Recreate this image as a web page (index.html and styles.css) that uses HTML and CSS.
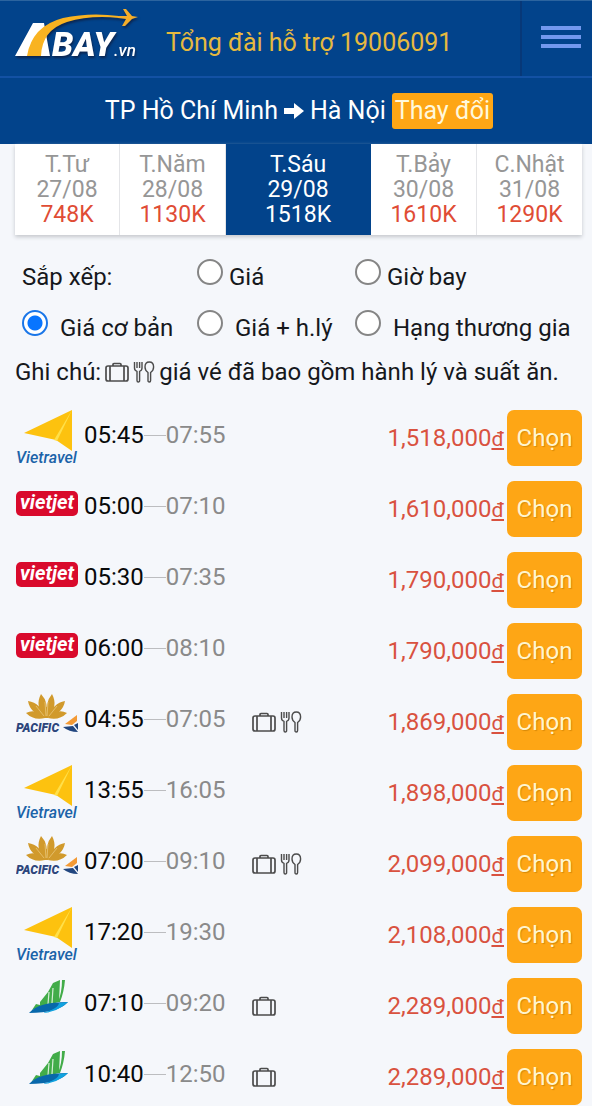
FILE: index.html
```html
<!DOCTYPE html>
<html lang="vi">
<head>
<meta charset="utf-8">
<meta name="viewport" content="width=device-width, initial-scale=1">
<title>Abay.vn - TP Hồ Chí Minh đi Hà Nội</title>
<link rel="stylesheet" href="styles.css">
</head>
<body>
<svg class="sprite" aria-hidden="true">
  <symbol id="bag" viewBox="0 0 24 20">
    <g fill="none" stroke="currentColor" stroke-width="1.700">
      <rect x="1" y="4" width="22" height="15" rx="2"/>
      <path d="M5 4v15M19 4v15M8 4V2.500Q8 1.500 9 1.500H15Q16 1.500 16 2.500V4"/>
    </g>
  </symbol>
  <symbol id="meal" viewBox="0 0 22 22">
    <g fill="none" stroke="currentColor" stroke-width="1.400" stroke-linejoin="round">
      <path d="M1.500 1V7Q1.500 9.500 4 10.300V19.500Q4 21 5.300 21T6.600 19.500V10.300Q9 9.500 9 7V1M4 1V7M6.600 1V7"/>
      <path d="M15 11.500Q12 9.500 12 6Q12 1 16.300 1T20.600 6Q20.600 9.500 17.600 11.500V19.500Q17.600 21 16.300 21T15 19.500Z"/>
    </g>
  </symbol>
  <symbol id="vietravel" viewBox="0 0 64 56">
    <path d="M8 23 56 0V41L40 30Z" fill="#fdc20f"/>
    <path d="M56 0 38 30 41 31Z" fill="#ffe04a"/>
  </symbol>
  <symbol id="vietjet" viewBox="0 0 64 56">
    <rect x="0" y="10" width="62" height="25" rx="5" fill="#d90a2c"/>
  </symbol>
  <symbol id="pacific" viewBox="0 0 64 56">
    <g fill="#d19a2c">
      <path d="M30 24Q18 13 25 0Q33 8 30.500 24ZM31 24Q29 8 36 0Q43 13 31 24Z"/>
      <path d="M29 24Q14 19 12 7Q25 9 29 24ZM32 24Q37 9 49 7Q47 19 32 24Z"/>
      <path d="M29 24Q18 27 10 19Q20 14 30 24ZM32 24Q41 14 51 19Q43 27 32 24Z"/>
      <path d="M22 13H39L32 24H29Z"/>
    </g>
    <path d="M30 22 29 8M31 22 32 8M28 22 20 12M33 22 41 12" stroke="#edcd85" stroke-width=".7"/>
    <path d="M49 30 61 21V27L56 31Z" fill="#f39a35"/>
    <path d="M47 33 57 32 62 38Q53 38 47 33ZM58 31 62 29V36Z" fill="#21467f"/>
  </symbol>
  <symbol id="bamboo" viewBox="0 0 64 56">
    <path d="M16 32 20 26 24 27V24L32 14 37 5 44 2 43 24 24 29Z" fill="#42ac49"/>
    <path d="M46 2H49Q48 14 44 24H42Q46 14 46 2Z" fill="#42ac49"/>
    <path d="M33 14 32 26M37 10 36 25" stroke="#d8efd9" stroke-width="1.200"/>
    <path d="M13 35Q22 24 52 24Q42 35 13 35Z" fill="#0868ab"/>
    <path d="M26 35Q42 31 43 25L52 24Q42 34 26 35Z" fill="#10a2df"/>
  </symbol>
</svg>

<header class="topbar">
  <a class="brand" href="#" aria-label="Abay.vn">
    <svg viewBox="0 0 126 54" width="126" height="54">
      <path d="M0 47 18 14H29L35 47H26L25 34 20 47Z" fill="#fff"/>
      <path d="M12 47Q17 17 48 9Q75 3 104 7V9Q75 6 52 13Q27 21 26 47Z" fill="#f9b321"/>
      <path d="M103 7 112 7 108 0H111L117 7 123 8 117 10 110 17H107L111 10 103 9Z" fill="#f4ad2a"/>
      <text x="37" y="47" class="brand-name">BAY<tspan class="brand-tld">.vn</tspan></text>
    </svg>
  </a>
  <a class="hotline" href="#">Tổng đài hỗ trợ 19006091</a>
  <button class="menu" type="button" aria-label="Menu"><span></span><span></span><span></span></button>
</header>

<div class="route">
  <span>TP Hồ Chí Minh</span>
  <svg class="arrow" viewBox="0 0 20 18" width="20" height="18" aria-hidden="true"><path d="M0 6H10V1L20 9 10 17V12H0Z" fill="#fff"/></svg>
  <span>Hà Nội</span>
  <button class="change" type="button">Thay đổi</button>
</div>

<nav class="dates">
  <a href="#"><span>T.Tư</span><span>27/08</span><b>748K</b></a>
  <a href="#"><span>T.Năm</span><span>28/08</span><b>1130K</b></a>
  <a href="#" class="current" aria-current="date"><span>T.Sáu</span><span>29/08</span><b>1518K</b></a>
  <a href="#"><span>T.Bảy</span><span>30/08</span><b>1610K</b></a>
  <a href="#"><span>C.Nhật</span><span>31/08</span><b>1290K</b></a>
</nav>

<main>
  <form class="sort">
    <span class="sort-title">Sắp xếp:</span>
    <label class="near"><input type="radio" name="order"><span>Giá</span></label>
    <label class="near"><input type="radio" name="order"><span>Giờ bay</span></label>
    <label><input type="radio" name="kind" checked><span>Giá cơ bản</span></label>
    <label><input type="radio" name="kind"><span>Giá + h.lý</span></label>
    <label><input type="radio" name="kind"><span>Hạng thương gia</span></label>
  </form>

  <p class="note">Ghi chú:
    <span class="extras"><svg class="bag"><use href="#bag"/></svg><svg class="meal"><use href="#meal"/></svg></span>
    giá vé đã bao gồm hành lý và suất ăn.</p>

  <ul class="flights">
    <li><svg class="logo" viewBox="0 0 64 56"><use href="#vietravel"/><text x="0" y="53" class="mark mark-vietravel">Vietravel</text></svg><span class="time">05:45<i></i><span>07:55</span></span><span class="extras"></span><span class="price">1,518,000<u>đ</u></span><button type="button">Chọn</button></li>
    <li><svg class="logo" viewBox="0 0 64 56"><use href="#vietjet"/><text x="31" y="28" class="mark mark-vietjet">vietjet</text></svg><span class="time">05:00<i></i><span>07:10</span></span><span class="extras"></span><span class="price">1,610,000<u>đ</u></span><button type="button">Chọn</button></li>
    <li><svg class="logo" viewBox="0 0 64 56"><use href="#vietjet"/><text x="31" y="28" class="mark mark-vietjet">vietjet</text></svg><span class="time">05:30<i></i><span>07:35</span></span><span class="extras"></span><span class="price">1,790,000<u>đ</u></span><button type="button">Chọn</button></li>
    <li><svg class="logo" viewBox="0 0 64 56"><use href="#vietjet"/><text x="31" y="28" class="mark mark-vietjet">vietjet</text></svg><span class="time">06:00<i></i><span>08:10</span></span><span class="extras"></span><span class="price">1,790,000<u>đ</u></span><button type="button">Chọn</button></li>
    <li><svg class="logo" viewBox="0 0 64 56"><use href="#pacific"/><text x="0" y="38" class="mark mark-pacific">PACIFIC</text></svg><span class="time">04:55<i></i><span>07:05</span></span><span class="extras"><svg class="bag"><use href="#bag"/></svg><svg class="meal"><use href="#meal"/></svg></span><span class="price">1,869,000<u>đ</u></span><button type="button">Chọn</button></li>
    <li><svg class="logo" viewBox="0 0 64 56"><use href="#vietravel"/><text x="0" y="53" class="mark mark-vietravel">Vietravel</text></svg><span class="time">13:55<i></i><span>16:05</span></span><span class="extras"></span><span class="price">1,898,000<u>đ</u></span><button type="button">Chọn</button></li>
    <li><svg class="logo" viewBox="0 0 64 56"><use href="#pacific"/><text x="0" y="38" class="mark mark-pacific">PACIFIC</text></svg><span class="time">07:00<i></i><span>09:10</span></span><span class="extras"><svg class="bag"><use href="#bag"/></svg><svg class="meal"><use href="#meal"/></svg></span><span class="price">2,099,000<u>đ</u></span><button type="button">Chọn</button></li>
    <li><svg class="logo" viewBox="0 0 64 56"><use href="#vietravel"/><text x="0" y="53" class="mark mark-vietravel">Vietravel</text></svg><span class="time">17:20<i></i><span>19:30</span></span><span class="extras"></span><span class="price">2,108,000<u>đ</u></span><button type="button">Chọn</button></li>
    <li><svg class="logo" viewBox="0 0 64 56" role="img" aria-label="Bamboo"><use href="#bamboo"/></svg><span class="time">07:10<i></i><span>09:20</span></span><span class="extras"><svg class="bag"><use href="#bag"/></svg></span><span class="price">2,289,000<u>đ</u></span><button type="button">Chọn</button></li>
    <li><svg class="logo" viewBox="0 0 64 56" role="img" aria-label="Bamboo"><use href="#bamboo"/></svg><span class="time">10:40<i></i><span>12:50</span></span><span class="extras"><svg class="bag"><use href="#bag"/></svg></span><span class="price">2,289,000<u>đ</u></span><button type="button">Chọn</button></li>
  </ul>
</main>
</body>
</html>
```

FILE: styles.css
```css
* { box-sizing: border-box; }

body {
  margin: 0;
  background: #f5f7fb;
  color: #16181c;
  font: 24px/28px Roboto, "Noto Sans", sans-serif;
}

a { color: inherit; text-decoration: none; }
button { border: 0; padding: 0; font: inherit; cursor: pointer; }
svg { display: block; }
.sprite { position: absolute; width: 0; height: 0; }

.topbar {
  display: flex;
  align-items: stretch;
  height: 78px;
  padding-left: 15px;
  background: #02438b;
  border-top: 1px solid #2c649f;
  border-bottom: 2px solid #1351a4;
}
.brand { padding-top: 8px; }
.brand svg { overflow: visible; filter: drop-shadow(1px 2px 1px #0b2550); }
.brand-name { font: italic 900 34px Roboto, sans-serif; fill: #fff; }
.brand-tld { font: italic 500 17px Roboto, sans-serif; }
.hotline {
  flex: 1;
  align-self: center;
  padding: 8px 0 0 25px;
  color: #e6b93f;
  font-size: 25px;
  white-space: nowrap;
}
.menu {
  display: flex;
  flex-direction: column;
  align-items: center;
  gap: 5px;
  width: 72px;
  padding: 25px 0 0 8px;
  background: none;
  border-left: 2px solid #073878;
}
.menu span { width: 40px; height: 4px; background: #7398ee; }

.route {
  display: flex;
  align-items: center;
  justify-content: center;
  gap: 6px;
  height: 66px;
  padding-left: 6px;
  background: #02438b;
  color: #fff;
  font-size: 25px;
  white-space: nowrap;
}
.change {
  height: 36px;
  padding: 0 3px;
  border-radius: 3px;
  background: #fea615;
  color: #fff8dc;
}

.dates {
  display: grid;
  grid-template-columns: 105fr 106fr 145fr 106fr 105fr;
  margin: 0 10px 0 15px;
  background: #fff;
  box-shadow: 0 2px 4px #c4c7cc;
  font-size: 23px;
}
.dates a {
  display: flex;
  flex-direction: column;
  align-items: center;
  padding: 8px 0;
  border-right: 1px solid #e4e5e8;
  color: #969696;
  line-height: 25px;
}
.dates a:last-child { border-right: 0; }
.dates b { color: #e04c35; font-weight: 400; }
.dates .current, .dates .current b { background: #02438b; color: #fff; }
.dates .current { border-color: #02438b; }

.sort {
  display: grid;
  grid-template-columns: 175fr 158fr 227fr;
  row-gap: 19px;
  padding: 24px 10px 0 22px;
}
.sort label { display: flex; gap: 12px; height: 32px; white-space: nowrap; }
.sort label.near { gap: 6px; }
.sort span { padding-top: 4px; }
.sort input {
  appearance: none;
  flex: none;
  width: 26px;
  height: 26px;
  margin: 0;
  border: 2px solid #858585;
  border-radius: 50%;
  background: #fff;
}
.sort input:checked {
  border-color: #1a76e8;
  background: radial-gradient(circle, #0875ff 7px, #fff 8px);
}

.note {
  display: flex;
  align-items: center;
  gap: 4px;
  margin: 16px 10px 24px 15px;
  white-space: nowrap;
}
.extras { display: flex; align-items: center; gap: 4px; color: #4c4c4c; }
.bag { width: 24px; height: 20px; }
.meal { width: 22px; height: 22px; }

.flights {
  display: grid;
  gap: 15px;
  margin: 0;
  padding: 0 10px 0 16px;
  list-style: none;
}
.flights li {
  display: grid;
  grid-template-columns: 65px 165px 1fr auto 75px;
  align-items: center;
  column-gap: 3px;
}
.logo { width: 64px; height: 56px; }
.mark { font-family: Roboto, sans-serif; font-style: italic; }
.mark-vietravel { font-size: 16px; font-weight: 500; fill: #1b63a9; }
.mark-vietjet { font-size: 20px; font-weight: 700; fill: #fff; text-anchor: middle; }
.mark-pacific { font-size: 12px; font-weight: 900; fill: #2d457c; }
.time { display: flex; align-items: center; padding-bottom: 6px; color: #08090a; }
.time span { color: #8a8a8a; }
.time i { width: 22px; height: 1px; background: #bcbdc0; }
.price { color: #d9523f; }
.flights u { font-size: 21px; text-decoration-thickness: 2px; text-underline-offset: 2px; }
.flights button {
  height: 56px;
  border-radius: 7px;
  background: #fea615;
  color: #fff5cf;
  text-shadow: 1px 1px 1px #d78909;
}
```
